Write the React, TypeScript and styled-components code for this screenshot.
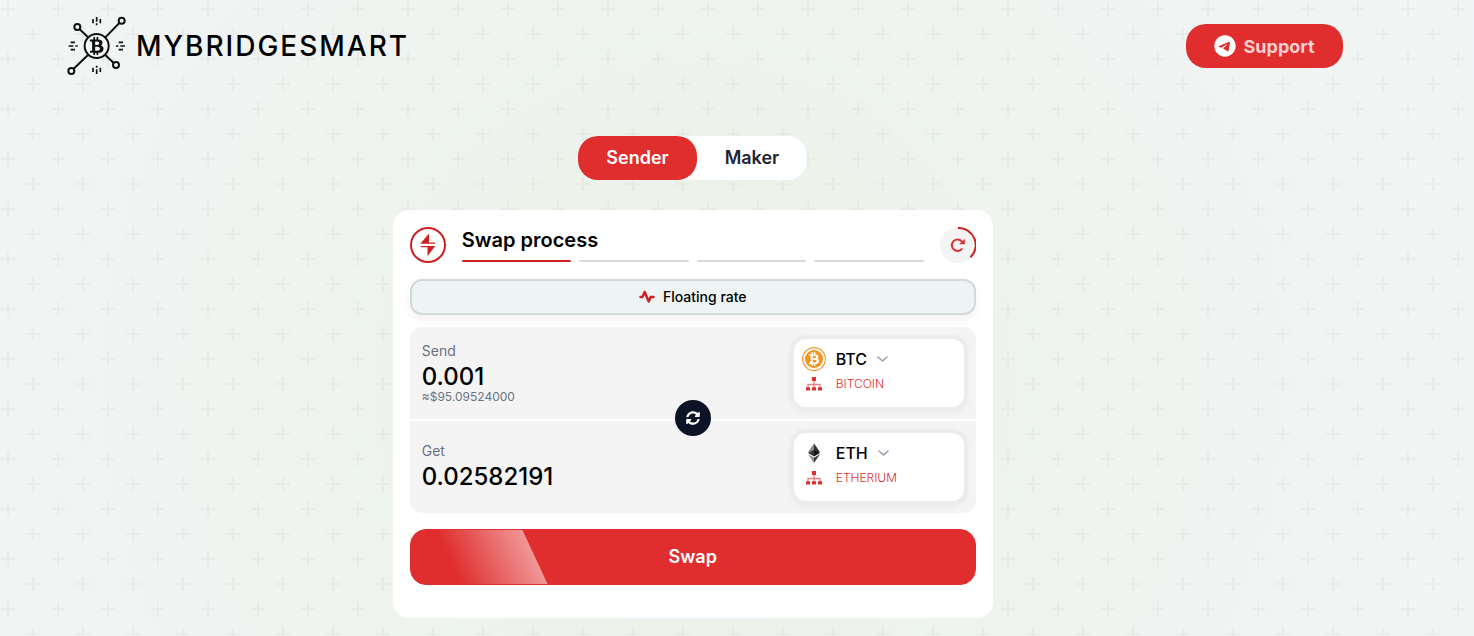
import React from "react";
import styled, { createGlobalStyle } from "styled-components";
import { FaTelegram, FaBtc } from "react-icons/fa6";
import { FaSyncAlt } from "react-icons/fa";

const red = "#e02e2e";
const deepRed = "#ce2020";

const crosses =
  "url(\"data:image/svg+xml,%3Csvg xmlns='http://www.w3.org/2000/svg' width='50' height='50'%3E%3Cpath d='M1 9h14M8 2v14M26 34h14M33 27v14' stroke='%23000' stroke-opacity='.03' stroke-width='2'/%3E%3C/svg%3E\")";

const GlobalStyle = createGlobalStyle`
  *, *::before, *::after { box-sizing: border-box; }
  body {
    margin: 0;
    min-height: 100vh;
    background:
      ${crosses},
      radial-gradient(circle at 47% 60%, #ecf1e8 0%, #edf3eb 28%, #eff4f1 55%, #f1f5f5 100%);
    font-family: Inter, "Liberation Sans", sans-serif;
    color: #000;
  }
  button, input { font: inherit; color: inherit; }
  button { border: 0; padding: 0; cursor: pointer; }
  svg { display: block; flex: none; }
`;

const Page = styled.div`
  width: 94%;
`;

const Header = styled.header`
  display: flex;
  align-items: center;
  justify-content: space-between;
  height: 92px;
  padding: 0 43px 0 67px;
`;

const Brand = styled.a`
  display: flex;
  align-items: center;
  gap: 9px;
  color: #000;
  text-decoration: none;
  font-size: 28px;
  line-height: 36px;
  font-weight: 500;
  letter-spacing: 2px;
`;

const SupportLink = styled.a`
  display: flex;
  align-items: center;
  gap: 8px;
  height: 44px;
  padding: 0 28px;
  border-radius: 20px;
  background: ${red};
  color: #fcd0d0;
  font-size: 18px;
  font-weight: 700;
  text-decoration: none;
  svg { color: #fff; }
`;

const Main = styled.main`
  display: flex;
  flex-direction: column;
  align-items: center;
  padding: 44px 16px 18px;
`;

const Tabs = styled.div`
  display: flex;
  border-radius: 20px;
  background: #fff;
`;

const Tab = styled.button<{ $active?: boolean }>`
  height: 44px;
  padding: 0 28px 2px;
  border-radius: 20px;
  background: ${(p) => (p.$active ? red : "transparent")};
  color: ${(p) => (p.$active ? "#fff" : "#1f2430")};
  font-size: 18px;
  font-weight: 600;
`;

const Card = styled.section`
  width: 100%;
  max-width: 600px;
  margin-top: 30px;
  padding: 17px 17px 33px;
  border-radius: 16px;
  background: #fff;
`;

const CardHead = styled.div`
  display: flex;
  align-items: center;
  gap: 16px;
`;

const Process = styled.div`
  flex: 1;
`;

const Title = styled.h1`
  margin: 0 0 8px;
  font-size: 20px;
  line-height: 24px;
  font-weight: 600;
`;

const Steps = styled.div`
  display: flex;
  gap: 8px;
`;

const Step = styled.span<{ $done?: boolean }>`
  flex: 1;
  height: 2px;
  border-radius: 1px;
  background: ${(p) => (p.$done ? deepRed : "#dadada")};
`;

const RefreshButton = styled.button`
  width: 36px;
  height: 36px;
  border-radius: 50%;
  background: #f4f4f4;
`;

const RateButton = styled.button`
  display: flex;
  align-items: center;
  justify-content: center;
  gap: 8px;
  width: 100%;
  height: 36px;
  margin: 16px 0 12px;
  border: 2px solid #d5d9db;
  border-radius: 12px;
  background: #eef4f3;
  box-shadow: 0 4px 8px rgba(0, 0, 0, 0.06);
  font-size: 14px;
  line-height: 20px;
  font-weight: 500;
`;

const Exchange = styled.div`
  position: relative;
  display: grid;
  gap: 2px;
  border-radius: 12px;
  overflow: hidden;
`;

const Leg = styled.div`
  display: flex;
  align-items: center;
  justify-content: space-between;
  height: 92px;
  padding: 0 8px 0 12px;
  background: #f4f4f4;
`;

const Amount = styled.div`
  display: flex;
  flex-direction: column;
`;

const AmountLabel = styled.label`
  color: #6b7280;
  font-size: 14px;
  line-height: 20px;
`;

const AmountInput = styled.input`
  width: 240px;
  height: 32px;
  padding: 0 0 2px;
  border: 0;
  outline: 0;
  background: none;
  font-size: 24px;
  font-weight: 500;
`;

const Worth = styled.span`
  margin-top: -4px;
  color: #6b7280;
  font-size: 12px;
  line-height: 16px;
`;

const CoinButton = styled.button`
  display: grid;
  grid-template-columns: 24px 1fr;
  grid-template-rows: 24px 26px;
  column-gap: 10px;
  align-content: start;
  align-items: center;
  justify-items: center;
  width: 178px;
  height: 76px;
  padding: 8px;
  border: 4px solid #ebecf0;
  border-radius: 16px;
  background: #fff;
  box-shadow: 0 2px 6px rgba(0, 0, 0, 0.04);
`;

const Ticker = styled.span`
  display: flex;
  align-items: center;
  gap: 10px;
  justify-self: start;
  font-size: 16px;
  font-weight: 500;
`;

const Network = styled.span`
  justify-self: start;
  color: ${red};
  font-size: 12px;
  line-height: 16px;
  font-weight: 300;
`;

const FlipButton = styled.button`
  position: absolute;
  top: 50%;
  left: 50%;
  display: grid;
  place-items: center;
  width: 36px;
  height: 36px;
  margin: -20px 0 0 -18px;
  border-radius: 50%;
  background: #0b1427;
  color: #fff;
`;

const SwapButton = styled.button`
  position: relative;
  width: 100%;
  height: 56px;
  margin-top: 16px;
  padding-bottom: 2px;
  border: 1px solid ${red};
  border-radius: 16px;
  overflow: hidden;
  background: ${red};
  color: #fff;
  font-size: 18px;
  font-weight: 600;
  &::before {
    content: "";
    position: absolute;
    top: 0;
    bottom: 0;
    left: 5%;
    width: 96px;
    transform: skewX(25deg);
    background: linear-gradient(90deg, rgba(255, 255, 255, 0) 10%, rgba(255, 255, 255, 0.5));
  }
`;

const BrandMark = () => (
  <svg width="60" height="60" viewBox="22 24 180 180" fill="none" stroke="#111" strokeWidth="6">
    <path d="M60 64l25 24M179 45l-42 43M137 141l25 24M85 141l-43 41" />
    <circle cx="53" cy="57" r="9" />
    <circle cx="186" cy="38" r="9" />
    <circle cx="169" cy="171" r="9" />
    <circle cx="35" cy="189" r="9" />
    <circle cx="111" cy="114" r="36" fill="#f7faf8" />
    <path
      d="M100 33v13M111 27v14M122 33v13M111 46v6M100 179v13M111 184v14M122 179v13M111 173v6M33 103h13M27 114h14M33 125h13M47 114h7M177 103h13M182 114h14M177 125h13M169 114h7"
      strokeWidth="5"
    />
    <FaBtc x={83} y={86} size={56} color="#111" />
  </svg>
);

const BitcoinIcon = () => (
  <svg width="24" height="24" viewBox="0 0 24 24">
    <circle cx="12" cy="12" r="11.400" fill="#fff" stroke="#f7931a" strokeWidth="1.100" />
    <circle cx="12" cy="12" r="9" fill="#f7931a" />
    <FaBtc x={5} y={5} size={14} color="#fff" />
  </svg>
);

const BoltIcon = () => (
  <svg width="36" height="36" viewBox="0 0 36 36" fill={deepRed}>
    <circle cx="18" cy="18" r="17" fill="#fff" stroke={deepRed} strokeWidth="2" />
    <path d="M19 6.500v9h6v1.300H10.300z" />
    <path d="M10.200 18.900h15l-7.700 10.300v-8.900h-6z" />
  </svg>
);

const RefreshIcon = () => (
  <svg width="36" height="36" viewBox="0 0 36 36" fill="none" stroke={deepRed} strokeWidth="2">
    <path d="M18 1a17 17 0 0 1 12.400 29.300" />
    <path d="M22 14.700a5.700 5.700 0 1 0 .2 6.800" stroke={red} />
    <path d="M24.800 11.800v5.400h-5.600z" fill={red} stroke="none" />
  </svg>
);

const PulseIcon = () => (
  <svg
    width="16"
    height="16"
    viewBox="0 0 16 16"
    fill="none"
    stroke={deepRed}
    strokeWidth="2.500"
    strokeLinecap="round"
    strokeLinejoin="round"
  >
    <path d="M1.500 8h2l2.200-5 4 9.500 2-4.500h2.800" />
  </svg>
);

const ChevronIcon = () => (
  <svg width="11" height="8" viewBox="0 0 11 8" fill="none" stroke="#9a9fab" strokeWidth="1.600" strokeLinecap="round">
    <path d="M1 2l4.500 4L10 2" />
  </svg>
);

const NetworkIcon = () => (
  <svg width="16" height="14" viewBox="0 0 16 14">
    <path d="M8 4v7M2 11V7.500h12V11" fill="none" stroke="#ea8080" strokeWidth="1.300" />
    <path d="M6 0h4v4H6zM0 10.200h4v3.400H0zM6 10.200h4v3.400H6zM12 10.200h4v3.400h-4z" fill={red} />
  </svg>
);

const EthereumIcon = () => (
  <svg width="24" height="24" viewBox="0 0 24 24">
    <path d="M12 2.500v11.700l-6-3.100z" fill="#8a8a8a" />
    <path d="M12 2.500v11.700l6-3.100z" fill="#343434" />
    <path d="M12 9l-6 2.900 6 3.500z" fill="#393939" />
    <path d="M12 9l6 2.900-6 3.500z" fill="#141414" />
    <path d="M6 13.300l6 3.500v5.100z" fill="#8c8c8c" />
    <path d="M18 13.300l-6 3.500v5.100z" fill="#3c3c3b" />
  </svg>
);

export default function App() {
  return (
    <>
      <GlobalStyle />
      <Page>
        <Header>
          <Brand href="#home">
            <BrandMark />
            MYBRIDGESMART
          </Brand>
          <SupportLink href="#support">
            <FaTelegram size={22} />
            Support
          </SupportLink>
        </Header>
        <Main>
          <Tabs>
            <Tab type="button" $active>
              Sender
            </Tab>
            <Tab type="button">Maker</Tab>
          </Tabs>
          <Card>
            <CardHead>
              <BoltIcon />
              <Process>
                <Title>Swap process</Title>
                <Steps>
                  <Step $done />
                  <Step />
                  <Step />
                  <Step />
                </Steps>
              </Process>
              <RefreshButton type="button" aria-label="Refresh">
                <RefreshIcon />
              </RefreshButton>
            </CardHead>
            <RateButton type="button">
              <PulseIcon />
              Floating rate
            </RateButton>
            <Exchange>
              <Leg>
                <Amount>
                  <AmountLabel htmlFor="send">Send</AmountLabel>
                  <AmountInput id="send" defaultValue="0.001" />
                  <Worth>≈$95.09524000</Worth>
                </Amount>
                <CoinButton type="button">
                  <BitcoinIcon />
                  <Ticker>
                    BTC
                    <ChevronIcon />
                  </Ticker>
                  <NetworkIcon />
                  <Network>BITCOIN</Network>
                </CoinButton>
              </Leg>
              <Leg>
                <Amount>
                  <AmountLabel htmlFor="get">Get</AmountLabel>
                  <AmountInput id="get" defaultValue="0.02582191" />
                </Amount>
                <CoinButton type="button">
                  <EthereumIcon />
                  <Ticker>
                    ETH
                    <ChevronIcon />
                  </Ticker>
                  <NetworkIcon />
                  <Network>ETHERIUM</Network>
                </CoinButton>
              </Leg>
              <FlipButton type="button" aria-label="Swap direction">
                <FaSyncAlt size={14} />
              </FlipButton>
            </Exchange>
            <SwapButton type="button">Swap</SwapButton>
          </Card>
        </Main>
      </Page>
    </>
  );
}
